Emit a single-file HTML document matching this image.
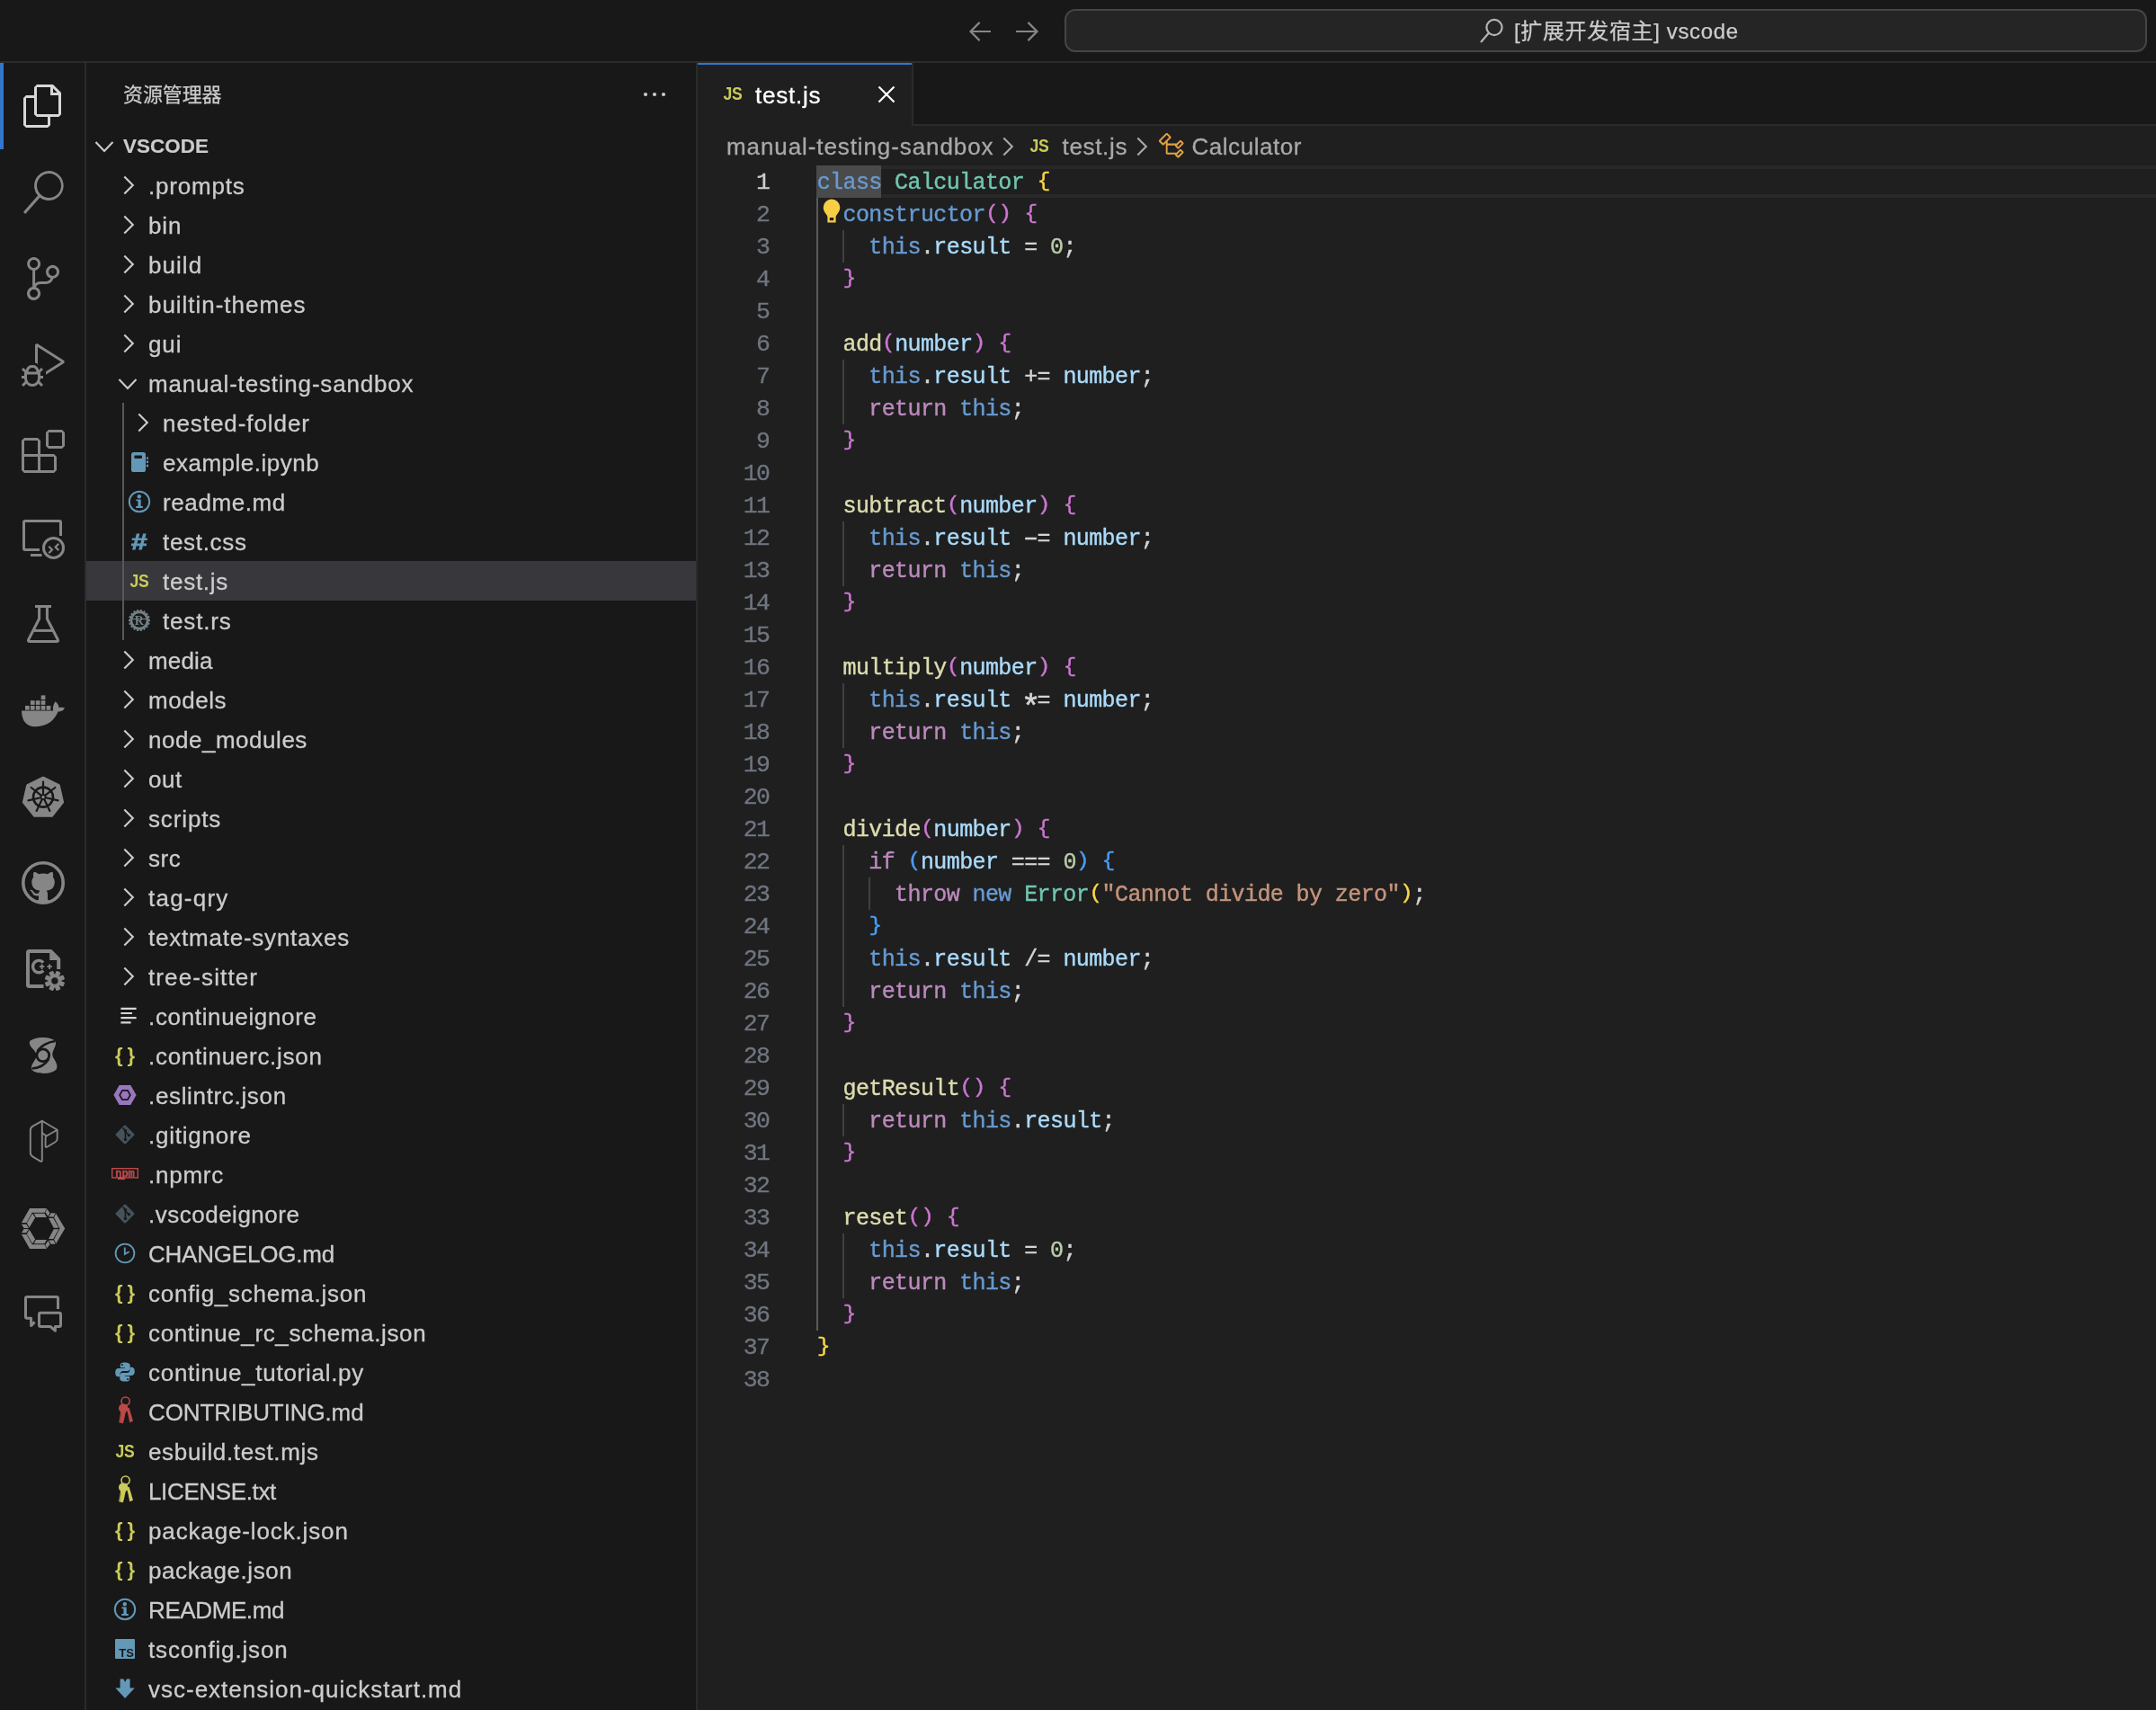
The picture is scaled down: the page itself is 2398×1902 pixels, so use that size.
<!DOCTYPE html><html lang="zh-CN"><head><meta charset="utf-8"><title>[扩展开发宿主] vscode</title>
<style>
*{box-sizing:border-box;margin:0;padding:0}
html,body{width:2398px;height:1902px;overflow:hidden;background:#181818}
body{position:relative;font-family:"Liberation Sans","Noto Sans CJK SC",sans-serif;color:#cccccc;will-change:transform}
.abs{position:absolute}
svg{position:absolute;overflow:visible}
#title{left:0;top:0;width:2398px;height:70px;background:#181818;border-bottom:2px solid #2b2b2b}
#cmd{left:1184px;top:10px;width:1204px;height:48px;border:2px solid #454545;border-radius:12px;background:#252526}
#cmdtxt{left:1684px;top:17.5px;-webkit-text-stroke:.25px #cccccc;font-size:24px;line-height:34px;color:#cccccc;white-space:nowrap}
#act{left:0;top:70px;width:96px;height:1832px;background:#181818;border-right:2px solid #2b2b2b}
#actind{left:0;top:70px;width:4px;height:96px;background:#3376cd}
#side{left:96px;top:70px;width:680px;height:1832px;background:#181818;border-right:2px solid #2b2b2b}
#sidehdr{left:137px;top:88.7px;-webkit-text-stroke:.25px #cccccc;font-size:22px;line-height:34px;color:#cccccc;white-space:nowrap}
#root{left:137px;top:145.5px;-webkit-text-stroke:.2px #cccccc;font-size:22.4px;line-height:34px;font-weight:bold;color:#cccccc;white-space:nowrap}
.row{position:absolute;left:96px;width:678px;height:44px}
.row.sel{background:#37373c}
.lbl{position:absolute;top:1.2px;-webkit-text-stroke:.3px #cccccc;height:44px;line-height:44px;font-size:26px;color:#cccccc;white-space:nowrap}
#tabs{left:776px;top:70px;width:1622px;height:70px;background:#181818;border-bottom:2px solid #2b2b2b}
#tab{left:776px;top:70px;width:238px;height:70px;background:#1f1f1f;border-top:2px solid #3376cd}#tabr{left:1014px;top:70px;width:2px;height:70px;background:#2b2b2b}
#tabtxt{left:840px;top:85.5px;-webkit-text-stroke:.3px #ffffff;font-size:26px;line-height:40px;color:#ffffff;white-space:nowrap}
#ed{left:776px;top:140px;width:1622px;height:1762px;background:#1f1f1f}
.bc{position:absolute;top:143px;-webkit-text-stroke:.3px #a9a9a9;font-size:26px;line-height:40px;color:#a9a9a9;white-space:nowrap}
#curline{left:908px;top:184px;width:1490px;height:36px;border-top:4px solid #282828;border-bottom:4px solid #282828}
#wordhl{left:908px;top:184px;width:72px;height:36px;background:#4a4a4a}
.ln{position:absolute;left:776px;width:79.5px;padding-top:1.2px;-webkit-text-stroke:.3px;letter-spacing:-1.5px;text-align:right;font-family:"Liberation Mono",monospace;font-size:26.5px;line-height:36px;height:36px;color:#6f7680;white-space:pre}
.ln.cur{color:#cccccc}
.cl{position:absolute;left:908.7px;padding-top:1.6px;-webkit-text-stroke:.4px;letter-spacing:-.6px;font-family:"Liberation Mono",monospace;font-size:25px;line-height:36px;height:36px;color:#d4d4d4;white-space:pre}
.k{color:#679ad1}.t{color:#71c6b1}.f{color:#dcdcaf}.v{color:#aadafa}.c{color:#bc89bd}.n{color:#bacdab}.s{color:#c5947c}.p{color:#d4d4d4}
.b1{color:#f9d849}.b2{color:#cc76d1}.b3{color:#4a9df8}
.b1,.b2,.b3{display:inline-block;transform:scaleY(.9);transform-origin:50% -3%}
.hy{display:inline-block;transform:scaleX(1.75)}
.as{display:inline-block;transform:translateY(9.5px) scale(1.45)}
.g{position:absolute;width:2px;background:#404040}
.g.a{background:#5a5a5a}
</style></head><body>
<div id="title" class="abs"></div>
<svg style="left:0px;top:0px" width="2398" height="70" viewBox="0 0 2398 70" ><g fill="none" stroke="#868686" stroke-width="2.2" stroke-linecap="butt" stroke-linejoin="miter"><path d="M1102 35H1080M1089.6 24.9L1079.5 35L1089.6 45.1"/><path d="M1130 35H1153M1143.4 24.9L1153.5 35L1143.4 45.1"/></g></svg>
<div id="cmd" class="abs"></div>
<svg style="left:0px;top:0px" width="2398" height="70" viewBox="0 0 2398 70" ><g fill="none" stroke="#b4b4b4" stroke-width="2.2"><circle cx="1662" cy="30.5" r="8.6"/><path d="M1655.8 36.8L1647 47"/></g></svg>
<div id="cmdtxt" class="abs" style="letter-spacing:0.643px;">[扩展开发宿主] vscode</div>
<div id="act" class="abs"></div><div id="actind" class="abs"></div>
<svg style="left:24px;top:94px" width="48" height="48" viewBox="0 0 24 24" ><path fill="#d7d7d7" d="M17.5 0h-9L7 1.5V6H2.5L1 7.5v15.07L2.5 24h12.07L16 22.57V18h4.7l1.3-1.43V4.5L17.5 0zm0 2.12l2.38 2.38H17.5V2.12zm-3 20.38h-12v-15H7v9.07L8.5 18h6v4.5zm6-6h-12v-15H16V6h4.5v10.5z"/></svg>
<svg style="left:24px;top:190px" width="48" height="48" viewBox="0 0 24 24" ><path fill="#868686" d="M15.25 0a8.25 8.25 0 0 0-6.18 13.72L1 22.88l1.12 1.12 8.05-9.12A8.251 8.251 0 1 0 15.25.01V0zm0 15a6.75 6.75 0 1 1 0-13.5 6.75 6.75 0 0 1 0 13.5z"/></svg>
<svg style="left:24px;top:286px" width="48" height="48" viewBox="0 0 24 24" ><path fill="#868686" d="M21.007 8.222A3.738 3.738 0 0 0 15.045 5.2a3.737 3.737 0 0 0 1.156 6.583 2.988 2.988 0 0 1-2.668 1.67h-2.99a4.456 4.456 0 0 0-2.989 1.165V7.4a3.737 3.737 0 1 0-1.494 0v9.117a3.776 3.776 0 1 0 1.816.099 2.99 2.99 0 0 1 2.668-1.667h2.99a4.484 4.484 0 0 0 4.223-3.039 3.736 3.736 0 0 0 3.25-3.687zM4.565 3.738a2.242 2.242 0 1 1 4.484 0 2.242 2.242 0 0 1-4.484 0zm4.484 16.441a2.242 2.242 0 1 1-4.484 0 2.242 2.242 0 0 1 4.484 0zm8.221-9.715a2.242 2.242 0 1 1 0-4.485 2.242 2.242 0 0 1 0 4.485z"/></svg>
<svg style="left:24px;top:382px" width="48" height="48" viewBox="0 0 24 24" ><path fill="#868686" d="M10.94 13.5l-1.32 1.32a3.73 3.73 0 0 0-7.24 0L1.06 13.5 0 14.56l1.72 1.72-.22.22V18H0v1.5h1.5v.08c.077.489.214.966.41 1.42L0 22.94 1.06 24l1.65-1.65A4.308 4.308 0 0 0 6 24a4.31 4.31 0 0 0 3.29-1.65L10.94 24 12 22.94 10.09 21c.198-.464.336-.951.41-1.45v-.1H12V18h-1.5v-1.5l-.22-.22L12 14.56l-1.06-1.06zM6 13.5a2.25 2.25 0 0 1 2.25 2.25h-4.5A2.25 2.25 0 0 1 6 13.5zm3 6a3.33 3.33 0 0 1-3 3 3.33 3.33 0 0 1-3-3v-2.25h6v2.25zm14.76-9.9v1.26L13.5 17.37V15.6l8.5-5.37L9 2v9.46a5.07 5.07 0 0 0-1.5-.72V.63L8.64 0l15.12 9.6z"/></svg>
<svg style="left:24px;top:478px" width="48" height="48" viewBox="0 0 24 24" ><path fill="#868686" d="M13.5 1.5L15 0h7.5L24 1.5V9l-1.5 1.5H15L13.5 9V1.5zm1.5 0V9h7.5V1.5H15zM0 15V6l1.5-1.5H9L10.5 6v7.5H18l1.5 1.5v7.5L18 24H1.5L0 22.5V15zm9-1.5V6H1.5v7.5H9zM9 15H1.5v7.5H9V15zm1.5 7.5H18V15h-7.5v7.5z"/></svg>
<svg style="left:24px;top:574px" width="48" height="48" viewBox="0 0 48 48" ><g fill="none" stroke="#868686" stroke-width="3" stroke-linejoin="round"><path d="M20 37.5H4Q2.5 37.5 2.5 36V7Q2.5 5.5 4 5.5H42Q43.5 5.5 43.5 7V22" stroke-linecap="butt"/><path d="M10 43.5H22.5" stroke-linecap="butt"/><circle cx="35.5" cy="35.4" r="11"/></g><g fill="none" stroke="#868686" stroke-width="2.2"><path d="M30.3 33.8L34 37.5L30.3 41.2"/><path d="M41.3 30.7L37.6 34.4L41.3 38.1"/></g></svg>
<svg style="left:24px;top:670px" width="48" height="48" viewBox="0 0 48 48" ><g fill="none" stroke="#868686" stroke-width="3" stroke-linejoin="round"><path d="M15 4.5H33" stroke-linecap="butt"/><path d="M19.6 5V18.3L7.8 41.2Q6.6 43.5 9.2 43.5H38.8Q41.4 43.5 40.2 41.2L28.4 18.3V5"/><path d="M13.5 31.4H34.5"/></g></svg>
<svg style="left:24px;top:766px" width="48" height="48" viewBox="0 0 48 48" ><rect x="4.0" y="19" width="4.7" height="4.7" fill="#868686"/><rect x="9.9" y="19" width="4.7" height="4.7" fill="#868686"/><rect x="15.8" y="19" width="4.7" height="4.7" fill="#868686"/><rect x="21.700000000000003" y="19" width="4.7" height="4.7" fill="#868686"/><rect x="27.6" y="19" width="4.7" height="4.7" fill="#868686"/><rect x="9.9" y="13.2" width="4.7" height="4.7" fill="#868686"/><rect x="15.8" y="13.2" width="4.7" height="4.7" fill="#868686"/><rect x="21.700000000000003" y="13.2" width="4.7" height="4.7" fill="#868686"/><rect x="21.7" y="7.4" width="4.7" height="4.7" fill="#868686"/><path fill="#868686" d="M0 24.6H35.2C34.3 21.5 35.2 17.2 37.6 14.2C40 16 41.5 18.6 41.6 21.3C43.8 20.6 46.2 20.8 48 21.6C46.8 24.4 43.6 25.8 40.6 25.6C37 34.5 29 42.3 15.5 42.3C5 42.3 .3 35.5 0 24.6z"/></svg>
<svg style="left:24px;top:862px" width="48" height="48" viewBox="0 0 48 48" ><path d="M24.00 1.80L41.83 10.38L46.23 29.67L33.89 45.14L14.11 45.14L1.77 29.67L6.17 10.38z" fill="#868686" stroke="#868686" stroke-width="3.2" stroke-linejoin="round" transform="translate(24 25.3) scale(.967) translate(-24 -24.6)"/><circle cx="24" cy="24.6" r="11" fill="none" stroke="#181818" stroke-width="2.6"/><path d="M24.00 21.60L24.00 7.60M26.35 22.73L37.29 14.00M26.92 25.27L40.57 28.38M25.30 27.30L31.38 39.92M22.70 27.30L16.62 39.92M21.08 25.27L7.43 28.38M21.65 22.73L10.71 14.00" stroke="#181818" stroke-width="2.2" fill="none" stroke-linecap="round"/><circle cx="24" cy="24.6" r="2.6" fill="none" stroke="#181818" stroke-width="1.6"/></svg>
<svg style="left:24px;top:958px" width="48" height="48" viewBox="0 0 48 48" ><circle cx="24" cy="24" r="22.2" fill="none" stroke="#868686" stroke-width="3.6"/><path d="M5.47 15.59c.4.07.55-.17.55-.38 0-.19-.01-.82-.01-1.49-2.01.37-2.53-.49-2.69-.94-.09-.23-.48-.94-.82-1.13-.28-.15-.68-.52-.01-.53.63-.01 1.08.58 1.23.82.72 1.21 1.87.87 2.33.66.07-.52.28-.87.51-1.07-1.78-.2-3.64-.89-3.64-3.95 0-.87.31-1.59.82-2.15-.08-.2-.36-1.02.08-2.12 0 0 .67-.21 2.2.82.64-.18 1.32-.27 2-.27.68 0 1.36.09 2 .27 1.53-1.04 2.2-.82 2.2-.82.44 1.1.16 1.92.08 2.12.51.56.82 1.27.82 2.15 0 3.07-1.87 3.75-3.65 3.95.29.25.54.73.54 1.48 0 1.07-.01 1.93-.01 2.2 0 .21.15.46.55.38L10.2 17H5.8z" fill="#868686" transform="translate(4.00 3.87) scale(2.5)"/></svg>
<svg style="left:24px;top:1054px" width="48" height="48" viewBox="0 0 48 48" ><path d="M24.5 43H8.5Q7 43 7 41.5V5.5Q7 4 8.5 4H32.4L41.2 12.8V24" fill="none" stroke="#868686" stroke-width="4" stroke-linejoin="round"/><path d="M31.2 3v11h11z" fill="#868686"/><path d="M24.2 16.6A6.7 6.7 0 1 0 24.2 25.6" fill="none" stroke="#868686" stroke-width="3.4"/><path d="M22.6 18.5v5.4M19.9 21.2h5.4M31.1 18.5v5.4M28.4 21.2h5.4" stroke="#868686" stroke-width="1.8" fill="none"/><path d="M37.32 30.31L39.09 26.32L42.90 27.90L41.33 31.97L41.93 32.57L46.00 31.00L47.58 34.81L43.59 36.58L43.59 37.42L47.58 39.19L46.00 43.00L41.93 41.43L41.33 42.03L42.90 46.10L39.09 47.68L37.32 43.69L36.48 43.69L34.71 47.68L30.90 46.10L32.47 42.03L31.87 41.43L27.80 43.00L26.22 39.19L30.21 37.42L30.21 36.58L26.22 34.81L27.80 31.00L31.87 32.57L32.47 31.97L30.90 27.90L34.71 26.32L36.48 30.31zM41.1 37a4.2 4.2 0 1 0 -8.4 0a4.2 4.2 0 1 0 8.4 0z" fill="#868686" fill-rule="evenodd" stroke="#868686" stroke-width="1" stroke-linejoin="round"/></svg>
<svg style="left:24px;top:1150px" width="48" height="48" viewBox="0 0 48 48" ><path fill="#868686" d="M9 8.5C12 3.5 31 1.5 37.5 8C40 13 33 19 34.5 24.5C36 29 41 33 39 39C33 46 16 45 11 39.5C9.5 33 18 28 16.5 22.5C15 17.5 7.5 14 9 8.5z"/><circle cx="23.8" cy="23.8" r="6.9" fill="none" stroke="#181818" stroke-width="2.8"/><path d="M17.5 19.5C21 13.5 29 9 37.5 8" fill="none" stroke="#181818" stroke-width="2.4"/><path d="M30.2 28C26.5 34 19.5 38 11.5 38.5" fill="none" stroke="#181818" stroke-width="2.4"/></svg>
<svg style="left:24px;top:1246px" width="48" height="48" viewBox="0 0 48 48" ><g fill="none" stroke="#868686" stroke-width="1.9" stroke-linejoin="round" stroke-linecap="round"><path d="M22.8 .8L12.5 6.6Q9.8 8.2 9.8 11.5V36Q9.8 39 12.5 40.6L21 45.6Q22.8 46.6 22.8 44.5V.8"/><path d="M22.8 .8L39.7 10.7V20.5Q39.7 23 37.5 24.3L28.3 29.8Q26.6 30.8 26.6 28.8V19.3Q26.6 17.6 28.2 17.3L39.7 10.7"/><path d="M22.8 14L27.5 17.4"/></g></svg>
<svg style="left:24px;top:1342px" width="48" height="48" viewBox="0 0 48 48" ><path d="M-0.07 17.94L9.10 2.06L27.93 2.06L25.63 6.64L11.72 6.64L5.50 17.94zM-0.07 19.74L5.33 19.74L7.95 24.00L2.55 24.00zM5.82 18.59L12.04 7.72L15.16 12.37L8.70 23.34zM13.68 7.79L25.47 7.79L27.93 12.04L15.97 12.04zM28.25 2.71L31.53 6.97L29.56 10.90L26.45 6.48zM38.24 7.79L48.23 24.49L38.24 41.19L36.11 36.60L42.50 24.49L36.11 12.37zM32.67 7.13L37.58 7.13L35.62 11.39L30.38 11.39zM30.05 13.03L35.29 13.03L41.35 23.83L35.78 23.83zM-0.07 31.04L9.10 46.92L27.93 46.92L25.63 42.33L11.72 42.33L5.50 31.04zM-0.07 29.24L5.33 29.24L7.95 24.98L2.55 24.98zM5.82 30.38L12.04 41.25L15.16 36.60L8.70 25.63zM13.68 41.19L25.47 41.19L27.93 36.93L15.97 36.93zM28.25 46.26L31.53 42.01L29.56 38.08L26.45 42.50zM32.67 41.84L37.58 41.84L35.62 37.58L30.38 37.58zM30.05 35.95L35.29 35.95L41.35 25.14L35.78 25.14z" fill="#868686"/></svg>
<svg style="left:24px;top:1438px" width="48" height="48" viewBox="0 0 48 48" ><g fill="none" stroke="#868686" stroke-width="3" stroke-linejoin="round"><path d="M40.5 18V6Q40.5 4.5 39 4.5H6Q4.5 4.5 4.5 6V26.8Q4.5 28.3 6 28.3H10.6V36.6L14.6 32.4" stroke-linecap="butt"/><path d="M21 22.3H42Q43.5 22.3 43.5 23.8V36Q43.5 37.5 42 37.5H37.4V42.2L32 37.5H21Q19.5 37.5 19.5 36V23.8Q19.5 22.3 21 22.3z"/></g></svg>
<div id="side" class="abs"></div>
<div id="sidehdr" class="abs" style="letter-spacing:-0.100px;">资源管理器</div>
<svg style="left:712px;top:97px" width="32" height="16" viewBox="-16 -8 32 16" ><circle cx="-10" cy="0" r="2.1" fill="#cccccc"/><circle cx="0" cy="0" r="2.1" fill="#cccccc"/><circle cx="10" cy="0" r="2.1" fill="#cccccc"/></svg>
<svg style="left:104px;top:151px" width="24" height="24" viewBox="-12 -12 24 24" ><path d="M-9.5 -5L0 5L9.5 -5" fill="none" stroke="#cccccc" stroke-width="2.1" stroke-linejoin="miter"/></svg>
<div id="root" class="abs" style="letter-spacing:0.080px;">VSCODE</div>
<div class="row" style="top:184px"><span class="lbl" style="left:69px;letter-spacing:0.800px;">.prompts</span></div>
<svg style="left:131px;top:194px" width="24" height="24" viewBox="-12 -12 24 24" ><path d="M-4.7 -9.5L4.8 0L-4.7 9.5" fill="none" stroke="#cccccc" stroke-width="2.1" stroke-linejoin="miter"/></svg>
<div class="row" style="top:228px"><span class="lbl" style="left:69px;letter-spacing:0.900px;">bin</span></div>
<svg style="left:131px;top:238px" width="24" height="24" viewBox="-12 -12 24 24" ><path d="M-4.7 -9.5L4.8 0L-4.7 9.5" fill="none" stroke="#cccccc" stroke-width="2.1" stroke-linejoin="miter"/></svg>
<div class="row" style="top:272px"><span class="lbl" style="left:69px;letter-spacing:1.050px;">build</span></div>
<svg style="left:131px;top:282px" width="24" height="24" viewBox="-12 -12 24 24" ><path d="M-4.7 -9.5L4.8 0L-4.7 9.5" fill="none" stroke="#cccccc" stroke-width="2.1" stroke-linejoin="miter"/></svg>
<div class="row" style="top:316px"><span class="lbl" style="left:69px;letter-spacing:0.970px;">builtin-themes</span></div>
<svg style="left:131px;top:326px" width="24" height="24" viewBox="-12 -12 24 24" ><path d="M-4.7 -9.5L4.8 0L-4.7 9.5" fill="none" stroke="#cccccc" stroke-width="2.1" stroke-linejoin="miter"/></svg>
<div class="row" style="top:360px"><span class="lbl" style="left:69px;letter-spacing:0.900px;">gui</span></div>
<svg style="left:131px;top:370px" width="24" height="24" viewBox="-12 -12 24 24" ><path d="M-4.7 -9.5L4.8 0L-4.7 9.5" fill="none" stroke="#cccccc" stroke-width="2.1" stroke-linejoin="miter"/></svg>
<div class="row" style="top:404px"><span class="lbl" style="left:69px;letter-spacing:0.810px;">manual-testing-sandbox</span></div>
<svg style="left:130px;top:415px" width="24" height="24" viewBox="-12 -12 24 24" ><path d="M-9.5 -5L0 5L9.5 -5" fill="none" stroke="#cccccc" stroke-width="2.1" stroke-linejoin="miter"/></svg>
<div class="row" style="top:448px"><span class="lbl" style="left:85px;letter-spacing:0.934px;">nested-folder</span></div>
<svg style="left:147px;top:458px" width="24" height="24" viewBox="-12 -12 24 24" ><path d="M-4.7 -9.5L4.8 0L-4.7 9.5" fill="none" stroke="#cccccc" stroke-width="2.1" stroke-linejoin="miter"/></svg>
<div class="row" style="top:492px"><span class="lbl" style="left:85px;letter-spacing:0.500px;">example.ipynb</span></div>
<svg style="left:141.0px;top:500.0px" width="28" height="28" viewBox="-14.0 -14.0 28 28" ><rect x="-9" y="-11" width="16" height="22" rx="2.6" fill="#6398b7"/><rect x="-5.6" y="-7.4" width="8.6" height="3.4" rx=".9" fill="#181818"/><path d="M8.9 -5.6v2.4M8.9 -1.4v2.4M8.9 2.8v2.4" stroke="#6398b7" stroke-width="2.2"/></svg>
<div class="row" style="top:536px"><span class="lbl" style="left:85px;letter-spacing:0.599px;">readme.md</span></div>
<svg style="left:141.0px;top:544.0px" width="28" height="28" viewBox="-14.0 -14.0 28 28" ><circle cx="0" cy="0" r="11.2" fill="none" stroke="#6398b7" stroke-width="2"/><circle cx="-.2" cy="-5.8" r="2.2" fill="#6398b7"/><path d="M-3.6 -2.6H1.7V5H3.8V7H-3.8V5H-1.6V-.7H-3.6z" fill="#6398b7"/></svg>
<div class="row" style="top:580px"><span class="lbl" style="left:85px;letter-spacing:0.686px;">test.css</span></div>
<svg style="left:141.0px;top:588.0px" width="28" height="28" viewBox="-14.0 -14.0 28 28" ><text x="-.5" y="9.6" text-anchor="middle" transform="translate(0,1) scale(1.14,.86)" font-family='"Liberation Sans",sans-serif' font-weight="bold" font-style="italic" font-size="28" stroke="#6398b7" stroke-width=".9" fill="#6398b7">#</text></svg>
<div class="row sel" style="top:624px"><span class="lbl" style="left:85px;letter-spacing:0.733px;">test.js</span></div>
<svg style="left:141.0px;top:632.0px" width="28" height="28" viewBox="-14.0 -14.0 28 28" ><text x="0" y="7.4" text-anchor="middle" transform="scale(.88,1)" font-family='"Liberation Sans",sans-serif' font-weight="bold" font-size="20" letter-spacing="-0.3" fill="#cbcb5a">JS</text></svg>
<div class="row" style="top:668px"><span class="lbl" style="left:85px;letter-spacing:0.833px;">test.rs</span></div>
<svg style="left:141.0px;top:676.0px" width="28" height="28" viewBox="-14.0 -14.0 28 28" ><circle r="9.2" fill="none" stroke="#717f85" stroke-width="3"/><path d="M9.60 0.00L12.00 0.00M9.02 3.28L11.28 4.10M7.35 6.17L9.19 7.71M4.80 8.31L6.00 10.39M1.67 9.45L2.08 11.82M-1.67 9.45L-2.08 11.82M-4.80 8.31L-6.00 10.39M-7.35 6.17L-9.19 7.71M-9.02 3.28L-11.28 4.10M-9.60 0.00L-12.00 0.00M-9.02 -3.28L-11.28 -4.10M-7.35 -6.17L-9.19 -7.71M-4.80 -8.31L-6.00 -10.39M-1.67 -9.45L-2.08 -11.82M1.67 -9.45L2.08 -11.82M4.80 -8.31L6.00 -10.39M7.35 -6.17L9.19 -7.71M9.02 -3.28L11.28 -4.10" stroke="#717f85" stroke-width="2.2"/><text x="-.3" y="5" text-anchor="middle" font-family='"Liberation Serif",serif' font-weight="bold" font-size="14" fill="#717f85">R</text><path d="M-8 -1.5H8" stroke="#717f85" stroke-width="1.2"/></svg>
<div class="row" style="top:712px"><span class="lbl" style="left:69px;letter-spacing:0.150px;">media</span></div>
<svg style="left:131px;top:722px" width="24" height="24" viewBox="-12 -12 24 24" ><path d="M-4.7 -9.5L4.8 0L-4.7 9.5" fill="none" stroke="#cccccc" stroke-width="2.1" stroke-linejoin="miter"/></svg>
<div class="row" style="top:756px"><span class="lbl" style="left:69px;letter-spacing:0.560px;">models</span></div>
<svg style="left:131px;top:766px" width="24" height="24" viewBox="-12 -12 24 24" ><path d="M-4.7 -9.5L4.8 0L-4.7 9.5" fill="none" stroke="#cccccc" stroke-width="2.1" stroke-linejoin="miter"/></svg>
<div class="row" style="top:800px"><span class="lbl" style="left:69px;letter-spacing:0.527px;">node_modules</span></div>
<svg style="left:131px;top:810px" width="24" height="24" viewBox="-12 -12 24 24" ><path d="M-4.7 -9.5L4.8 0L-4.7 9.5" fill="none" stroke="#cccccc" stroke-width="2.1" stroke-linejoin="miter"/></svg>
<div class="row" style="top:844px"><span class="lbl" style="left:69px;letter-spacing:0.600px;">out</span></div>
<svg style="left:131px;top:854px" width="24" height="24" viewBox="-12 -12 24 24" ><path d="M-4.7 -9.5L4.8 0L-4.7 9.5" fill="none" stroke="#cccccc" stroke-width="2.1" stroke-linejoin="miter"/></svg>
<div class="row" style="top:888px"><span class="lbl" style="left:69px;letter-spacing:0.867px;">scripts</span></div>
<svg style="left:131px;top:898px" width="24" height="24" viewBox="-12 -12 24 24" ><path d="M-4.7 -9.5L4.8 0L-4.7 9.5" fill="none" stroke="#cccccc" stroke-width="2.1" stroke-linejoin="miter"/></svg>
<div class="row" style="top:932px"><span class="lbl" style="left:69px;letter-spacing:0.600px;">src</span></div>
<svg style="left:131px;top:942px" width="24" height="24" viewBox="-12 -12 24 24" ><path d="M-4.7 -9.5L4.8 0L-4.7 9.5" fill="none" stroke="#cccccc" stroke-width="2.1" stroke-linejoin="miter"/></svg>
<div class="row" style="top:976px"><span class="lbl" style="left:69px;letter-spacing:1.233px;">tag-qry</span></div>
<svg style="left:131px;top:986px" width="24" height="24" viewBox="-12 -12 24 24" ><path d="M-4.7 -9.5L4.8 0L-4.7 9.5" fill="none" stroke="#cccccc" stroke-width="2.1" stroke-linejoin="miter"/></svg>
<div class="row" style="top:1020px"><span class="lbl" style="left:69px;letter-spacing:0.774px;">textmate-syntaxes</span></div>
<svg style="left:131px;top:1030px" width="24" height="24" viewBox="-12 -12 24 24" ><path d="M-4.7 -9.5L4.8 0L-4.7 9.5" fill="none" stroke="#cccccc" stroke-width="2.1" stroke-linejoin="miter"/></svg>
<div class="row" style="top:1064px"><span class="lbl" style="left:69px;letter-spacing:1.120px;">tree-sitter</span></div>
<svg style="left:131px;top:1074px" width="24" height="24" viewBox="-12 -12 24 24" ><path d="M-4.7 -9.5L4.8 0L-4.7 9.5" fill="none" stroke="#cccccc" stroke-width="2.1" stroke-linejoin="miter"/></svg>
<div class="row" style="top:1108px"><span class="lbl" style="left:69px;letter-spacing:0.657px;">.continueignore</span></div>
<svg style="left:125.0px;top:1116.0px" width="28" height="28" viewBox="-14.0 -14.0 28 28" ><path d="M-4.6 -7.6H12.6M-4.6 -2.4H8M-4.6 2.8H12.6M-4.6 8H6.6" stroke="#d5d7d6" stroke-width="2.2" transform="translate(0,-.6)"/></svg>
<div class="row" style="top:1152px"><span class="lbl" style="left:69px;letter-spacing:0.720px;">.continuerc.json</span></div>
<svg style="left:125.0px;top:1160.0px" width="28" height="28" viewBox="-14.0 -14.0 28 28" ><text x="2.5" y="7" text-anchor="middle" font-family='"Liberation Sans",sans-serif' font-weight="bold" font-size="22" letter-spacing="5" fill="#cbcb5a">{}</text></svg>
<div class="row" style="top:1196px"><span class="lbl" style="left:69px;letter-spacing:0.662px;">.eslintrc.json</span></div>
<svg style="left:125.0px;top:1204.0px" width="28" height="28" viewBox="-14.0 -14.0 28 28" ><path d="M12.60 0.00L6.30 10.91L-6.30 10.91L-12.60 0.00L-6.30 -10.91L6.30 -10.91z" fill="#9976bf"/><path d="M6.90 0.00L3.45 5.98L-3.45 5.98L-6.90 0.00L-3.45 -5.98L3.45 -5.98z" fill="#181818"/><path d="M4.90 0.00L2.45 4.24L-2.45 4.24L-4.90 0.00L-2.45 -4.24L2.45 -4.24z" fill="#9976bf"/></svg>
<div class="row" style="top:1240px"><span class="lbl" style="left:69px;letter-spacing:0.778px;">.gitignore</span></div>
<svg style="left:125.0px;top:1248.0px" width="28" height="28" viewBox="-14.0 -14.0 28 28" ><rect x="-7.8" y="-7.8" width="15.6" height="15.6" rx="1.2" fill="#45525a" transform="rotate(45)"/><g stroke="#181818" stroke-width="1.6" fill="none"><path d="M-2.5 -7.5L.4 -4.6V5M.4 -3.2L4.2 .6"/></g><circle cx=".4" cy="5.4" r="1.7" fill="#181818"/><circle cx="4.4" cy=".8" r="1.7" fill="#181818"/><circle cx=".4" cy="-4.2" r="1.7" fill="#181818"/></svg>
<div class="row" style="top:1284px"><span class="lbl" style="left:69px;letter-spacing:0.760px;">.npmrc</span></div>
<svg style="left:124px;top:1298.6px" width="30" height="14" viewBox="0 0 30 14" ><rect x=".7" y=".7" width="28.6" height="10.2" fill="none" stroke="#bc4949" stroke-width="1.4"/><rect x="7" y="10" width="8" height="3" fill="#bc4949"/><text x="15" y="9.6" text-anchor="middle" font-family='"Liberation Mono",monospace' font-weight="bold" font-size="12" fill="#bc4949" stroke="#bc4949" stroke-width=".35" letter-spacing="0">npm</text></svg>
<div class="row" style="top:1328px"><span class="lbl" style="left:69px;letter-spacing:0.500px;">.vscodeignore</span></div>
<svg style="left:125.0px;top:1336.0px" width="28" height="28" viewBox="-14.0 -14.0 28 28" ><rect x="-7.8" y="-7.8" width="15.6" height="15.6" rx="1.2" fill="#45525a" transform="rotate(45)"/><g stroke="#181818" stroke-width="1.6" fill="none"><path d="M-2.5 -7.5L.4 -4.6V5M.4 -3.2L4.2 .6"/></g><circle cx=".4" cy="5.4" r="1.7" fill="#181818"/><circle cx="4.4" cy=".8" r="1.7" fill="#181818"/><circle cx=".4" cy="-4.2" r="1.7" fill="#181818"/></svg>
<div class="row" style="top:1372px"><span class="lbl" style="left:69px;letter-spacing:-0.218px;">CHANGELOG.md</span></div>
<svg style="left:125.0px;top:1380.0px" width="28" height="28" viewBox="-14.0 -14.0 28 28" ><circle r="10.4" fill="none" stroke="#6398b7" stroke-width="1.8"/><path d="M-.2 -6.4V.9L4.6 -1.8" fill="none" stroke="#6398b7" stroke-width="1.8"/></svg>
<div class="row" style="top:1416px"><span class="lbl" style="left:69px;letter-spacing:0.742px;">config_schema.json</span></div>
<svg style="left:125.0px;top:1424.0px" width="28" height="28" viewBox="-14.0 -14.0 28 28" ><text x="2.5" y="7" text-anchor="middle" font-family='"Liberation Sans",sans-serif' font-weight="bold" font-size="22" letter-spacing="5" fill="#cbcb5a">{}</text></svg>
<div class="row" style="top:1460px"><span class="lbl" style="left:69px;letter-spacing:0.627px;">continue_rc_schema.json</span></div>
<svg style="left:125.0px;top:1468.0px" width="28" height="28" viewBox="-14.0 -14.0 28 28" ><text x="2.5" y="7" text-anchor="middle" font-family='"Liberation Sans",sans-serif' font-weight="bold" font-size="22" letter-spacing="5" fill="#cbcb5a">{}</text></svg>
<div class="row" style="top:1504px"><span class="lbl" style="left:69px;letter-spacing:0.726px;">continue_tutorial.py</span></div>
<svg style="left:125.0px;top:1512.0px" width="28" height="28" viewBox="-14.0 -14.0 28 28" ><path fill="#6398b7" d="M-.6 -10.6c-4.4 0-4.6 1.9-4.6 3.2v2.6h5v.9h-7.2c-2 0-3.4 1.6-3.4 4.6s1.3 4.5 3.2 4.5h2.1v-2.9c0-2 1.6-3.4 3.5-3.4h4.9c1.6 0 2.8-1.3 2.8-2.9v-3.4c0-1.6-1.6-3.2-6.300-3.200zm-2.5 1.700a1 1 0 1 1 0 2a1 1 0 0 1 0-2z"/><path fill="#6398b7" d="M.6 10.600c4.400 0 4.600-1.900 4.600-3.200v-2.600h-5v-.9h7.200c2 0 3.400-1.600 3.400-4.600s-1.300-4.500-3.200-4.500h-2.100v2.900c0 2-1.600 3.400-3.500 3.400h-4.900c-1.600 0-2.800 1.300-2.800 2.900v3.400c0 1.600 1.600 3.200 6.300 3.200zm2.500-1.700a1 1 0 1 1 0-2a1 1 0 0 1 0 2z"/></svg>
<div class="row" style="top:1548px"><span class="lbl" style="left:69px;letter-spacing:-0.114px;">CONTRIBUTING.md</span></div>
<svg style="left:124.0px;top:1555.0px" width="30" height="30" viewBox="-15.0 -15.0 30 30" ><circle cx=".6" cy="-11.4" r="4.6" fill="none" stroke="#bc4949" stroke-width="1.6"/><ellipse cx="-1.8" cy="-3.6" rx="5.2" ry="5" fill="#bc4949"/><path d="M-4.6 -1L-6.8 12.2L-2.2 13.2L-1 9L1.4 -2z" fill="#bc4949"/><path d="M1.6 -3.2L3.6 4L5.2 12.2L9 10.8L6.8 3L4.6 -4.2z" fill="#bc4949"/><path d="M-4.4 3L-5.6 12" stroke="#181818" stroke-width=".5" fill="none" opacity=".5"/></svg>
<div class="row" style="top:1592px"><span class="lbl" style="left:69px;letter-spacing:0.653px;">esbuild.test.mjs</span></div>
<svg style="left:125.0px;top:1600.0px" width="28" height="28" viewBox="-14.0 -14.0 28 28" ><text x="0" y="7.4" text-anchor="middle" transform="scale(.88,1)" font-family='"Liberation Sans",sans-serif' font-weight="bold" font-size="20" letter-spacing="-0.3" fill="#cbcb5a">JS</text></svg>
<div class="row" style="top:1636px"><span class="lbl" style="left:69px;letter-spacing:-0.360px;">LICENSE.txt</span></div>
<svg style="left:124.0px;top:1643.0px" width="30" height="30" viewBox="-15.0 -15.0 30 30" ><circle cx=".6" cy="-11.4" r="4.6" fill="none" stroke="#cbcb5a" stroke-width="1.6"/><ellipse cx="-1.8" cy="-3.6" rx="5.2" ry="5" fill="#cbcb5a"/><path d="M-4.6 -1L-6.8 12.2L-2.2 13.2L-1 9L1.4 -2z" fill="#cbcb5a"/><path d="M1.6 -3.2L3.6 4L5.2 12.2L9 10.8L6.8 3L4.6 -4.2z" fill="#cbcb5a"/><path d="M-4.4 3L-5.6 12" stroke="#181818" stroke-width=".5" fill="none" opacity=".5"/></svg>
<div class="row" style="top:1680px"><span class="lbl" style="left:69px;letter-spacing:0.862px;">package-lock.json</span></div>
<svg style="left:125.0px;top:1688.0px" width="28" height="28" viewBox="-14.0 -14.0 28 28" ><text x="2.5" y="7" text-anchor="middle" font-family='"Liberation Sans",sans-serif' font-weight="bold" font-size="22" letter-spacing="5" fill="#cbcb5a">{}</text></svg>
<div class="row" style="top:1724px"><span class="lbl" style="left:69px;letter-spacing:0.600px;">package.json</span></div>
<svg style="left:125.0px;top:1732.0px" width="28" height="28" viewBox="-14.0 -14.0 28 28" ><text x="2.5" y="7" text-anchor="middle" font-family='"Liberation Sans",sans-serif' font-weight="bold" font-size="22" letter-spacing="5" fill="#cbcb5a">{}</text></svg>
<div class="row" style="top:1768px"><span class="lbl" style="left:69px;letter-spacing:-0.400px;">README.md</span></div>
<svg style="left:125.0px;top:1776.0px" width="28" height="28" viewBox="-14.0 -14.0 28 28" ><circle cx="0" cy="0" r="11.2" fill="none" stroke="#6398b7" stroke-width="2"/><circle cx="-.2" cy="-5.8" r="2.2" fill="#6398b7"/><path d="M-3.6 -2.6H1.7V5H3.8V7H-3.8V5H-1.6V-.7H-3.6z" fill="#6398b7"/></svg>
<div class="row" style="top:1812px"><span class="lbl" style="left:69px;letter-spacing:0.850px;">tsconfig.json</span></div>
<svg style="left:125.0px;top:1820.0px" width="28" height="28" viewBox="-14.0 -14.0 28 28" ><rect x="-11" y="-11" width="22" height="22" rx="1" fill="#6398b7"/><text x="1.600" y="9" text-anchor="middle" font-family='"Liberation Sans",sans-serif' font-weight="bold" font-size="13" fill="#181818">TS</text></svg>
<div class="row" style="top:1856px"><span class="lbl" style="left:69px;letter-spacing:1.000px;">vsc-extension-quickstart.md</span></div>
<svg style="left:125.0px;top:1864.0px" width="28" height="28" viewBox="-14.0 -14.0 28 28" ><path fill="#6398b7" d="M-5.4 -10.600H-1.600L.1 -7L1.800 -10.600H5.600V-.4H10.800L.1 11L-10.600 -.4H-5.400z"/></svg>
<div class="abs" style="left:136px;top:448px;width:2px;height:264px;background:#585858"></div>
<div id="tabs" class="abs"></div><div id="tab" class="abs"></div><div id="tabr" class="abs"></div>
<svg style="left:801.0px;top:90.0px" width="28" height="28" viewBox="-14.0 -14.0 28 28" ><text x="0" y="7.4" text-anchor="middle" transform="scale(.88,1)" font-family='"Liberation Sans",sans-serif' font-weight="bold" font-size="20" letter-spacing="-0.3" fill="#cbcb5a">JS</text></svg>
<div id="tabtxt" class="abs" style="letter-spacing:0.767px;">test.js</div>
<svg style="left:974px;top:93px" width="24" height="24" viewBox="-12 -12 24 24" ><path d="M-8.5 -8.5L8.5 8.5M8.5 -8.5L-8.5 8.5" fill="none" stroke="#ffffff" stroke-width="2.2"/></svg>
<div id="ed" class="abs"></div>
<span class="bc" style="left:808px;letter-spacing:0.905px;">manual-testing-sandbox</span>
<svg style="left:1109px;top:151px" width="24" height="24" viewBox="-12 -12 24 24" ><path d="M-4.7 -9.5L4.8 0L-4.7 9.5" fill="none" stroke="#a9a9a9" stroke-width="2.1" stroke-linejoin="miter"/></svg>
<svg style="left:1142.0px;top:148.0px" width="28" height="28" viewBox="-14.0 -14.0 28 28" ><text x="0" y="7.4" text-anchor="middle" transform="scale(.88,1)" font-family='"Liberation Sans",sans-serif' font-weight="bold" font-size="20" letter-spacing="-0.3" fill="#cbcb5a">JS</text></svg>
<span class="bc" style="left:1181.5px;letter-spacing:0.667px;">test.js</span>
<svg style="left:1258px;top:151px" width="24" height="24" viewBox="-12 -12 24 24" ><path d="M-4.7 -9.5L4.8 0L-4.7 9.5" fill="none" stroke="#a9a9a9" stroke-width="2.1" stroke-linejoin="miter"/></svg>
<svg style="left:1286.5px;top:146px" width="32" height="32" viewBox="0 0 16 16" ><path d="M11.34 9.71h.71l2.67-2.67v-.71L13.38 5h-.7l-1.82 1.81h-5V5.56l1.86-1.85V3l-2-2H5L1 5v.71l2 2h.71l1.14-1.15v5.79l.5.5H10v.52l1.33 1.34h.71l2.67-2.67v-.71L13.37 10h-.7l-1.86 1.85h-5v-4H10v.48l1.34 1.38zm1.69-3.65l.63.63-2 2-.63-.63 2-2zm-9.650.59L2.060 5.360l3.290-3.300 1.320 1.300-3.290 3.290zm9.650 4.400l.63.63-2 2-.63-.63 2-2z" fill="#e2a144"/></svg>
<span class="bc" style="left:1325.5px;letter-spacing:0.533px;">Calculator</span>
<div id="curline" class="abs"></div><div id="wordhl" class="abs"></div>
<div class="g a" style="left:908px;top:220px;height:1260px"></div>
<div class="g" style="left:937px;top:256px;height:36px"></div>
<div class="g" style="left:937px;top:400px;height:72px"></div>
<div class="g" style="left:937px;top:580px;height:72px"></div>
<div class="g" style="left:937px;top:760px;height:72px"></div>
<div class="g" style="left:937px;top:940px;height:180px"></div>
<div class="g" style="left:966px;top:976px;height:36px"></div>
<div class="g" style="left:937px;top:1228px;height:36px"></div>
<div class="g" style="left:937px;top:1372px;height:72px"></div>
<div class="ln cur" style="top:184px">1</div>
<div class="cl" style="top:184px"><span class="k">class</span><span class="p"> </span><span class="t">Calculator</span><span class="p"> </span><span class="b1">{</span></div>
<div class="ln" style="top:220px">2</div>
<div class="cl" style="top:220px"><span class="p">  </span><span class="k">constructor</span><span class="b2">()</span><span class="p"> </span><span class="b2">{</span></div>
<div class="ln" style="top:256px">3</div>
<div class="cl" style="top:256px"><span class="p">    </span><span class="k">this</span><span class="p">.</span><span class="v">result</span><span class="p"> = </span><span class="n">0</span><span class="p">;</span></div>
<div class="ln" style="top:292px">4</div>
<div class="cl" style="top:292px"><span class="p">  </span><span class="b2">}</span></div>
<div class="ln" style="top:328px">5</div>
<div class="ln" style="top:364px">6</div>
<div class="cl" style="top:364px"><span class="p">  </span><span class="f">add</span><span class="b2">(</span><span class="v">number</span><span class="b2">)</span><span class="p"> </span><span class="b2">{</span></div>
<div class="ln" style="top:400px">7</div>
<div class="cl" style="top:400px"><span class="p">    </span><span class="k">this</span><span class="p">.</span><span class="v">result</span><span class="p"> += </span><span class="v">number</span><span class="p">;</span></div>
<div class="ln" style="top:436px">8</div>
<div class="cl" style="top:436px"><span class="p">    </span><span class="c">return</span><span class="p"> </span><span class="k">this</span><span class="p">;</span></div>
<div class="ln" style="top:472px">9</div>
<div class="cl" style="top:472px"><span class="p">  </span><span class="b2">}</span></div>
<div class="ln" style="top:508px">10</div>
<div class="ln" style="top:544px">11</div>
<div class="cl" style="top:544px"><span class="p">  </span><span class="f">subtract</span><span class="b2">(</span><span class="v">number</span><span class="b2">)</span><span class="p"> </span><span class="b2">{</span></div>
<div class="ln" style="top:580px">12</div>
<div class="cl" style="top:580px"><span class="p">    </span><span class="k">this</span><span class="p">.</span><span class="v">result</span><span class="p"> <span class="hy">-</span>= </span><span class="v">number</span><span class="p">;</span></div>
<div class="ln" style="top:616px">13</div>
<div class="cl" style="top:616px"><span class="p">    </span><span class="c">return</span><span class="p"> </span><span class="k">this</span><span class="p">;</span></div>
<div class="ln" style="top:652px">14</div>
<div class="cl" style="top:652px"><span class="p">  </span><span class="b2">}</span></div>
<div class="ln" style="top:688px">15</div>
<div class="ln" style="top:724px">16</div>
<div class="cl" style="top:724px"><span class="p">  </span><span class="f">multiply</span><span class="b2">(</span><span class="v">number</span><span class="b2">)</span><span class="p"> </span><span class="b2">{</span></div>
<div class="ln" style="top:760px">17</div>
<div class="cl" style="top:760px"><span class="p">    </span><span class="k">this</span><span class="p">.</span><span class="v">result</span><span class="p"> <span class="as">*</span>= </span><span class="v">number</span><span class="p">;</span></div>
<div class="ln" style="top:796px">18</div>
<div class="cl" style="top:796px"><span class="p">    </span><span class="c">return</span><span class="p"> </span><span class="k">this</span><span class="p">;</span></div>
<div class="ln" style="top:832px">19</div>
<div class="cl" style="top:832px"><span class="p">  </span><span class="b2">}</span></div>
<div class="ln" style="top:868px">20</div>
<div class="ln" style="top:904px">21</div>
<div class="cl" style="top:904px"><span class="p">  </span><span class="f">divide</span><span class="b2">(</span><span class="v">number</span><span class="b2">)</span><span class="p"> </span><span class="b2">{</span></div>
<div class="ln" style="top:940px">22</div>
<div class="cl" style="top:940px"><span class="p">    </span><span class="c">if</span><span class="p"> </span><span class="b3">(</span><span class="v">number</span><span class="p"> === </span><span class="n">0</span><span class="b3">)</span><span class="p"> </span><span class="b3">{</span></div>
<div class="ln" style="top:976px">23</div>
<div class="cl" style="top:976px"><span class="p">      </span><span class="c">throw</span><span class="p"> </span><span class="k">new</span><span class="p"> </span><span class="t">Error</span><span class="b1">(</span><span class="s">&quot;Cannot divide by zero&quot;</span><span class="b1">)</span><span class="p">;</span></div>
<div class="ln" style="top:1012px">24</div>
<div class="cl" style="top:1012px"><span class="p">    </span><span class="b3">}</span></div>
<div class="ln" style="top:1048px">25</div>
<div class="cl" style="top:1048px"><span class="p">    </span><span class="k">this</span><span class="p">.</span><span class="v">result</span><span class="p"> /= </span><span class="v">number</span><span class="p">;</span></div>
<div class="ln" style="top:1084px">26</div>
<div class="cl" style="top:1084px"><span class="p">    </span><span class="c">return</span><span class="p"> </span><span class="k">this</span><span class="p">;</span></div>
<div class="ln" style="top:1120px">27</div>
<div class="cl" style="top:1120px"><span class="p">  </span><span class="b2">}</span></div>
<div class="ln" style="top:1156px">28</div>
<div class="ln" style="top:1192px">29</div>
<div class="cl" style="top:1192px"><span class="p">  </span><span class="f">getResult</span><span class="b2">()</span><span class="p"> </span><span class="b2">{</span></div>
<div class="ln" style="top:1228px">30</div>
<div class="cl" style="top:1228px"><span class="p">    </span><span class="c">return</span><span class="p"> </span><span class="k">this</span><span class="p">.</span><span class="v">result</span><span class="p">;</span></div>
<div class="ln" style="top:1264px">31</div>
<div class="cl" style="top:1264px"><span class="p">  </span><span class="b2">}</span></div>
<div class="ln" style="top:1300px">32</div>
<div class="ln" style="top:1336px">33</div>
<div class="cl" style="top:1336px"><span class="p">  </span><span class="f">reset</span><span class="b2">()</span><span class="p"> </span><span class="b2">{</span></div>
<div class="ln" style="top:1372px">34</div>
<div class="cl" style="top:1372px"><span class="p">    </span><span class="k">this</span><span class="p">.</span><span class="v">result</span><span class="p"> = </span><span class="n">0</span><span class="p">;</span></div>
<div class="ln" style="top:1408px">35</div>
<div class="cl" style="top:1408px"><span class="p">    </span><span class="c">return</span><span class="p"> </span><span class="k">this</span><span class="p">;</span></div>
<div class="ln" style="top:1444px">36</div>
<div class="cl" style="top:1444px"><span class="p">  </span><span class="b2">}</span></div>
<div class="ln" style="top:1480px">37</div>
<div class="cl" style="top:1480px"><span class="b1">}</span></div>
<div class="ln" style="top:1516px">38</div>
<svg style="left:911px;top:220px" width="28" height="28" viewBox="-14 -14 28 28" ><path d="M0 -12.5a9.3 9.3 0 0 0 -9.3 9.3c0 3.4 1.7 5.6 3.3 7.6c.9 1.1 1.4 2.2 1.4 3.6h9.2c0 -1.4 .5 -2.5 1.4 -3.6c1.6 -2 3.3 -4.2 3.3 -7.6a9.3 9.3 0 0 0 -9.3 -9.3z" fill="#f7ce46"/><path d="M-3.4 8v4.4h6.8V8" fill="none" stroke="#f7ce46" stroke-width="2.4"/></svg>
</body></html>
